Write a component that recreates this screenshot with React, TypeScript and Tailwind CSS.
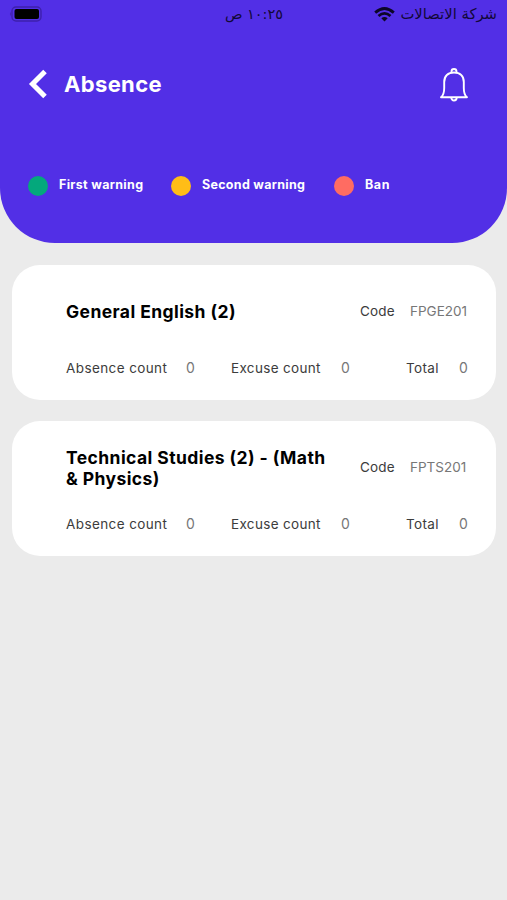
interface Course {
  name: string;
  code: string;
  absence: number;
  excuse: number;
  total: number;
}

const courses: Course[] = [
  { name: "General English (2)", code: "FPGE201", absence: 0, excuse: 0, total: 0 },
  { name: "Technical Studies (2) - (Math & Physics)", code: "FPTS201", absence: 0, excuse: 0, total: 0 },
];

/*--------- ios status bar ----------*/
function StatusBar() {
  return (
    <div className="flex h-7 items-center justify-between pl-[9px] pr-[10px] font-['DejaVu_Sans','Noto_Sans',sans-serif] text-[#120838]">
      <div className="w-[126px]">
        <svg width="34" height="16" viewBox="0 0 34 16">
          <rect x="3" y="1" width="29" height="14" rx="4" fill="none" stroke="#3e20ad" strokeWidth="1.4" />
          <path d="M1.8 5.5Q0 8 1.8 10.5z" fill="#3e20ad" />
          <rect x="5.5" y="3" width="24.5" height="10" rx="2" fill="#000" />
        </svg>
      </div>
      <span dir="rtl" className="pt-[2px] text-[14.5px]">
        ١٠:٢٥ ص
      </span>
      <div className="flex w-[124px] items-center justify-end gap-[5px]">
        <svg className="shrink-0" width="21" height="15" viewBox="0 0 21 15" fill="none" stroke="#0c0628" strokeWidth="2.8">
          <path d="M1.2 5.6Q10.5 -2.6 19.8 5.6" />
          <path d="M4.5 9Q10.5 3.8 16.5 9" />
          <path d="M7.3 11.3Q10.5 8.6 13.7 11.3L10.5 14.6z" fill="#0c0628" stroke="none" />
        </svg>
        <span dir="rtl" className="whitespace-nowrap pt-px text-[14.8px]">
          شركة الاتصالات
        </span>
      </div>
    </div>
  );
}

function Header() {
  return (
    <header className="h-[243px] rounded-b-[55px] bg-[#522fe6] text-white">
      <StatusBar />
      <div className="mt-[38px] flex h-9 items-center pl-[28px] pr-[38px]">
        <svg width="20" height="30" viewBox="0 0 20 30" fill="none" stroke="currentColor" strokeWidth="5">
          <path d="M17 2.5L4.5 15L17 27.5" />
        </svg>
        <h1 className="ml-[16px] text-[22px] font-bold tracking-[0.35px]">Absence</h1>
        <svg
          className="ml-auto mt-[2px]"
          width="30"
          height="34"
          viewBox="0 0 30 34"
          fill="none"
          stroke="currentColor"
          strokeWidth="1.9"
          strokeLinejoin="round">
          <path d="M12.5 4.6V3.5a2.5 2.5 0 0 1 5 0v1.1" />
          <path d="M2 29.2C5 27 5.2 24 5.2 20V14C5.2 8 9 4.5 15 4.5S24.8 8 24.8 14V20C24.8 24 25 27 28 29.2z" />
          <path d="M12.3 29.5a2.7 3 0 0 0 5.4 0" />
        </svg>
      </div>
      <div className="mt-[73px] flex h-[21px] items-center pl-[28px] text-[12.5px] font-bold">
        <div className="flex w-[143px] items-center gap-[11px]">
          <i className="size-5 rounded-full bg-[#04a87c]" />
          <span className="tracking-[0.32px]">First warning</span>
        </div>
        <div className="flex w-[163px] items-center gap-[11px]">
          <i className="size-5 rounded-full bg-[#ffbd17]" />
          <span className="tracking-[0.29px]">Second warning</span>
        </div>
        <div className="flex items-center gap-[11px]">
          <i className="size-5 rounded-full bg-[#ff6c62]" />
          <span className="tracking-[0.6px]">Ban</span>
        </div>
      </div>
    </header>
  );
}

function CourseCard({ course }: { course: Course }) {
  return (
    <article className="h-[135px] rounded-[28px] bg-white pl-[54px] pt-[25px] text-[13.5px] text-[#3c3c3c]">
      <div className="flex h-[43px] items-center">
        <h2 className="w-[294px] pr-[26px] text-[17.5px] font-bold leading-[21px] tracking-[0.42px] text-black">
          {course.name}
        </h2>
        <span className="w-[50px] tracking-[0.2px]">Code</span>
        <span className="text-[#777]">{course.code}</span>
      </div>
      <div className="mt-[24px] flex h-5 items-baseline whitespace-nowrap">
        <span className="w-[120px] tracking-[0.4px]">Absence count</span>
        <span className="w-[45px] text-[14px] text-[#777]">{course.absence}</span>
        <span className="w-[110px] tracking-[0.33px]">Excuse count</span>
        <span className="w-[65px] text-[14px] text-[#777]">{course.excuse}</span>
        <span className="w-[53px] tracking-[0.35px]">Total</span>
        <span className="text-[14px] text-[#777]">{course.total}</span>
      </div>
    </article>
  );
}

export default function App() {
  return (
    <div className="h-[900px] w-[507px] overflow-hidden bg-[#ebebeb] font-['Inter',sans-serif]">
      <Header />
      <main className="flex flex-col gap-[21px] pl-[12px] pr-[11px] pt-[22px]">
        {courses.map((course) => (
          <CourseCard key={course.code} course={course} />
        ))}
      </main>
    </div>
  );
}
